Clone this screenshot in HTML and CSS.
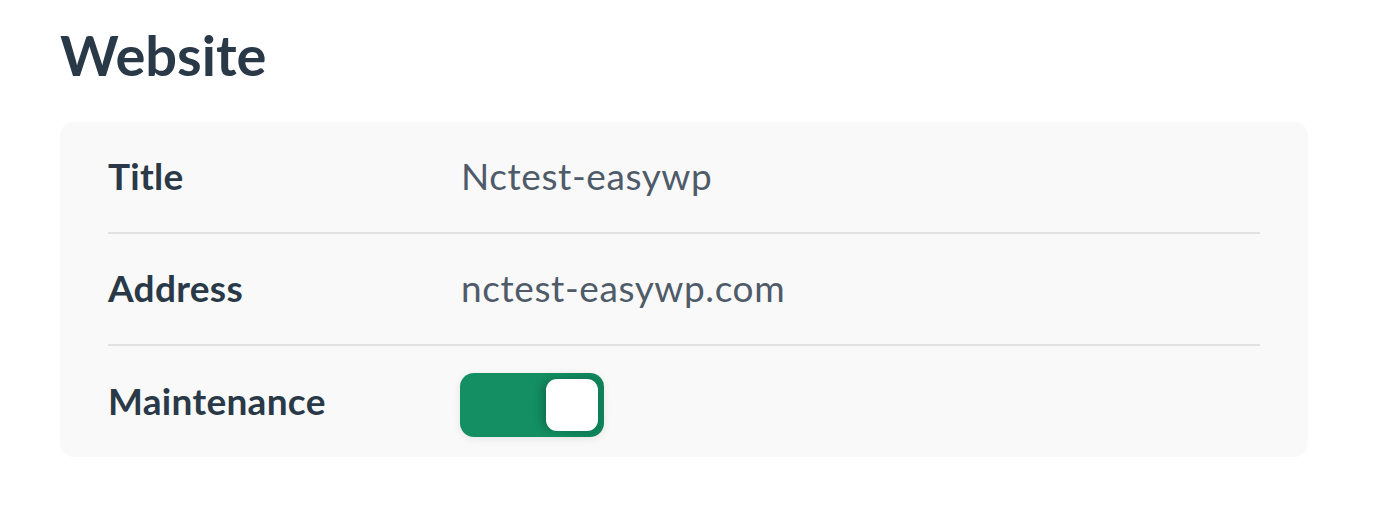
FILE: index.html
```html
<!DOCTYPE html>
<html lang="en">
<head>
<meta charset="utf-8">
<title>Website</title>
<link rel="stylesheet" href="styles.css">
</head>
<body>
<main class="page">
  <h1 class="heading">Website</h1>
  <section class="card">
    <div class="row">
      <div class="label">Title</div>
      <div class="value">Nctest-easywp</div>
    </div>
    <div class="row">
      <div class="label">Address</div>
      <div class="value">nctest-easywp.com</div>
    </div>
    <div class="row">
      <div class="label">Maintenance</div>
      <div class="value">
        <button class="toggle" type="button" aria-pressed="true" aria-label="Maintenance"><span class="knob"></span></button>
      </div>
    </div>
  </section>
</main>
</body>
</html>
```

FILE: styles.css
```css
* { box-sizing: border-box; }
html, body { margin: 0; padding: 0; background: #ffffff; }
body {
  font-family: "Lato", "Noto Sans", sans-serif;
  color: #2a3947;
}
.page {
  padding: 20px 80px 0 60px;
}
.heading {
  margin: 0 0 32px 0;
  font-size: 56px;
  line-height: 70px;
  font-weight: 700;
  color: #2a3947;
}
.card {
  width: 1248px;
  background: #f9f9f9;
  border-radius: 14px;
  padding: 0 48px;
}
.row {
  display: flex;
  align-items: center;
  height: 112px;
  padding-bottom: 3px;
  border-bottom: 2px solid #e2e2e2;
}
.row:last-child { border-bottom: none; height: 111px; }
.label {
  width: 353px;
  flex: none;
  font-size: 37px;
  letter-spacing: 0.3px;
  font-weight: 700;
  color: #2a3947;
}
.value {
  font-size: 37px;
  letter-spacing: 0.6px;
  color: #4f5b69;
}
.toggle {
  display: flex;
  justify-content: flex-end;
  align-items: center;
  width: 144px;
  height: 64px;
  padding: 0 6px;
  border: none;
  border-radius: 14px;
  background: linear-gradient(90deg, #138f63 0%, #138f63 70%, #0f8159 100%);
  margin: 9px 0 0 -1px;
  box-shadow: 0 2px 8px rgba(0,0,0,0.08);
}
.knob {
  width: 52px;
  height: 52px;
  border-radius: 11px;
  background: #ffffff;
  box-shadow: -4px 0 8px rgba(0,0,0,0.22);
}
```
